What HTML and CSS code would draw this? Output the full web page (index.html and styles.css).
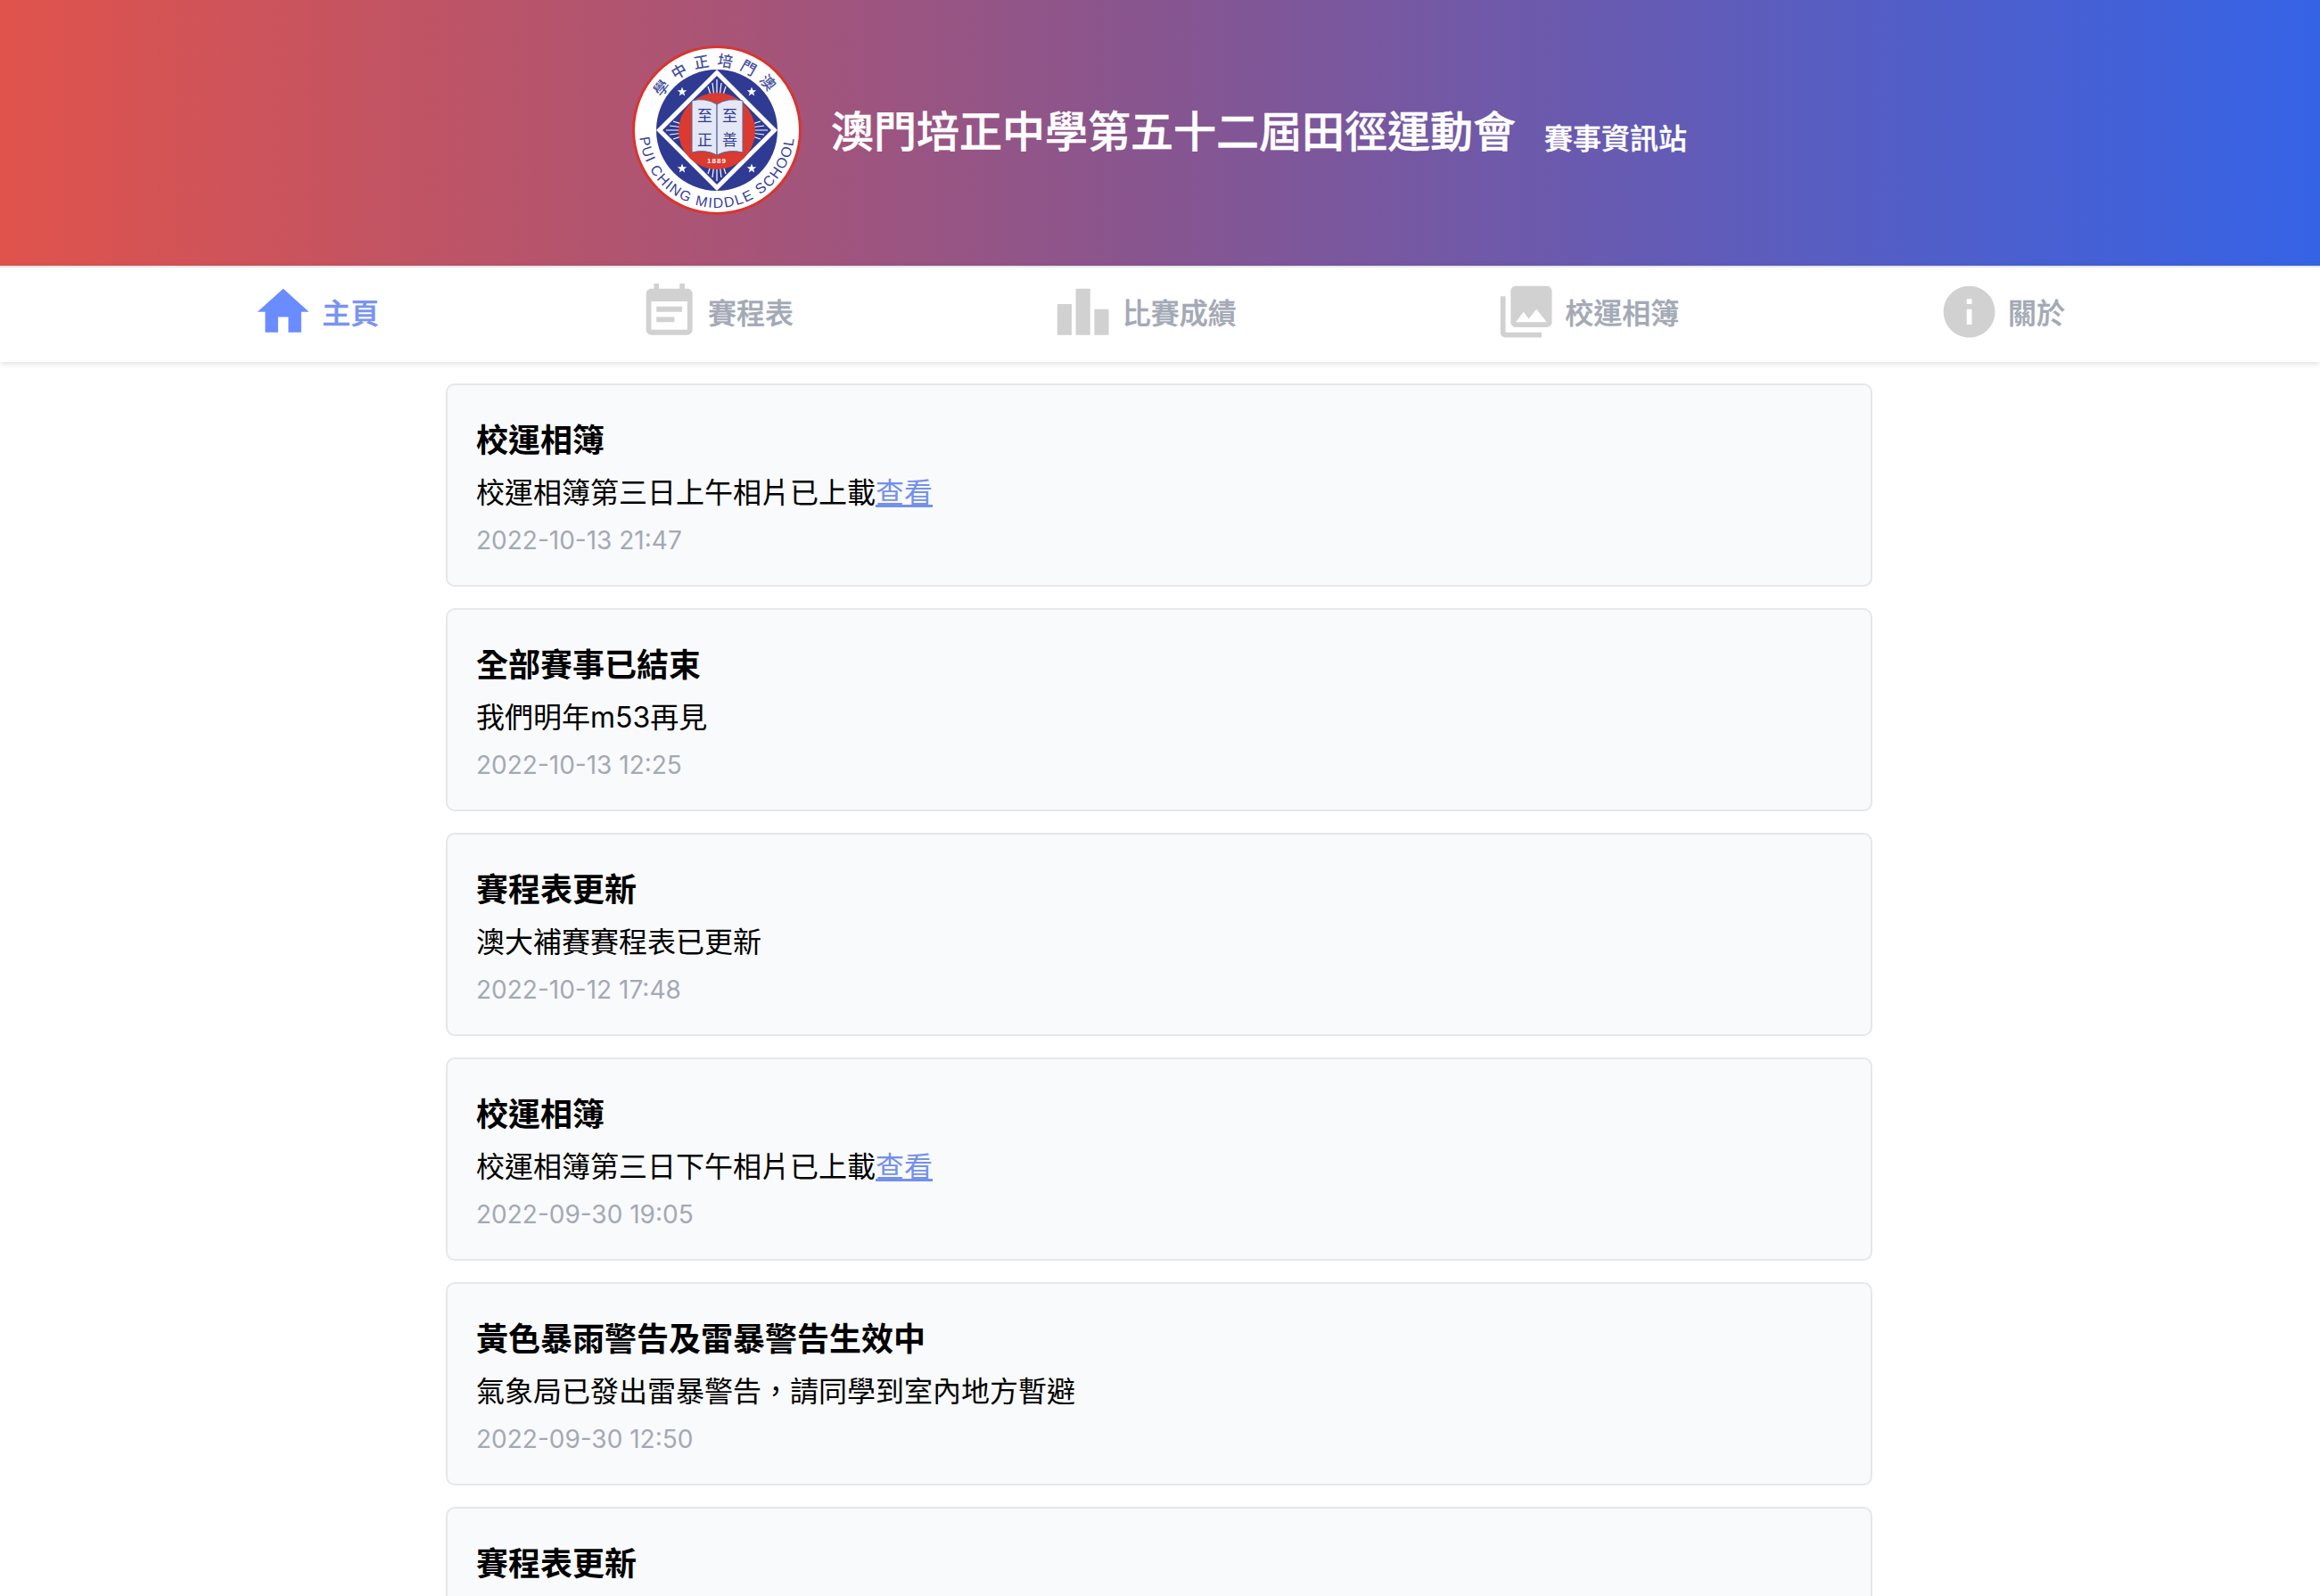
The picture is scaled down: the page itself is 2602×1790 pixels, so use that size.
FILE: index.html
```html
<!DOCTYPE html>
<html lang="zh-Hant">
<head>
<meta charset="utf-8">
<title>澳門培正中學第五十二屆田徑運動會 賽事資訊站</title>
<link rel="stylesheet" href="styles.css">
</head>
<body>
<header class="banner">
  <svg class="logo" viewBox="0 0 190 190" aria-label="Pui Ching Middle School">
    <defs>
      <path id="arcTop" d="M 23 95 A 72 72 0 0 1 167 95"/>
      <path id="arcBottom" d="M 8 95 A 87 87 0 0 0 182 95"/>
      <polygon id="star" points="0,-5.5 1.4,-1.8 5.2,-1.7 2.2,.7 3.2,4.4 0,2.2 -3.2,4.4 -2.2,.7 -5.2,-1.7 -1.4,-1.8"/>
    </defs>
    <circle cx="95" cy="95" r="93.5" fill="#fff" stroke="#d8352f" stroke-width="3"/>
    <circle cx="95" cy="95" r="68" fill="#2f3a92"/>
    <g fill="#fff">
      <use href="#star" x="56" y="52"/><use href="#star" x="134" y="52"/>
      <use href="#star" x="56" y="138"/><use href="#star" x="134" y="138"/>
    </g>
    <path d="M95 27 L163 95 L95 163 L27 95 Z" fill="#fff"/>
    <path d="M95 34 L156 95 L95 156 L34 95 Z" fill="#2f3a92"/>
    <g stroke="#fff" stroke-width="1.2">
      <path d="M95 38V54M90 42l1.5 12M100 42l-1.5 12M85 46l3 9M105 46l-3 9M95 152V136M90 148l1.5-12M100 148l-1.5-12M85 144l3-9M105 144l-3-9M38 95H54M42 90l12 1.5M42 100l12-1.5M46 85l9 3M46 105l9-3M152 95H136M148 90l-12 1.5M148 100l-12-1.5M144 85l-9 3M144 105l-9-3"/>
    </g>
    <circle cx="95" cy="96" r="43" fill="#da3a30"/>
    <path d="M67 62 Q82 58 95 66 Q108 58 124 62 V120 Q108 116 95 123 Q82 116 67 120 Z" fill="#e4e7f4" stroke="#5d659f" stroke-width="1"/>
    <path d="M95 66V123" stroke="#4a5290" stroke-width="1.2"/>
    <text class="bookch" x="81.5" y="85">至</text>
    <text class="bookch" x="109.5" y="85">至</text>
    <text class="bookch" x="81.5" y="112">正</text>
    <text class="bookch" x="109.5" y="112">善</text>
    <text class="year" x="95" y="132">1889</text>
    <text class="ring-cjk"><textPath href="#arcTop" startOffset="50%" text-anchor="middle">學中正培門澳</textPath></text>
    <text class="ring-en"><textPath href="#arcBottom" startOffset="50%" text-anchor="middle">PUI CHING MIDDLE SCHOOL</textPath></text>
  </svg>
  <h1 class="site-title">澳門培正中學第五十二屆田徑運動會</h1>
  <span class="site-sub">賽事資訊站</span>
</header>

<nav class="tabs">
  <a class="tab tab-active">
    <svg class="tab-icon" viewBox="0 0 24 24"><path d="M10 20v-6h4v6h5v-8h3L12 3 2 12h3v8z"/></svg>
    <span>主頁</span>
  </a>
  <a class="tab">
    <svg class="tab-icon" viewBox="0 0 24 24"><path d="M17 10H7v2h10v-2zm2-7h-1V1h-2v2H8V1H6v2H5c-1.11 0-1.99.9-1.99 2L3 19c0 1.1.89 2 2 2h14c1.1 0 2-.9 2-2V5c0-1.1-.9-2-2-2zm0 16H5V8h14v11zm-5-5H7v2h7v-2z"/></svg>
    <span>賽程表</span>
  </a>
  <a class="tab">
    <svg class="tab-icon" viewBox="0 0 24 24"><path d="M2 9h5.6v12H2zM9.2 3h5.6v18H9.2zM16.4 11H22v10h-5.6z"/></svg>
    <span>比賽成績</span>
  </a>
  <a class="tab">
    <svg class="tab-icon" viewBox="0 0 24 24"><path d="M22 16V4c0-1.1-.9-2-2-2H8c-1.1 0-2 .9-2 2v12c0 1.1.9 2 2 2h12c1.1 0 2-.9 2-2zm-11-4l2.03 2.71L16 11l4 5H8l3-4zM2 6v14c0 1.1.9 2 2 2h14v-2H4V6H2z"/></svg>
    <span>校運相簿</span>
  </a>
  <a class="tab">
    <svg class="tab-icon" viewBox="0 0 24 24"><path d="M12 2C6.48 2 2 6.48 2 12s4.48 10 10 10 10-4.48 10-10S17.52 2 12 2zm1 15h-2v-6h2v6zm0-8h-2V7h2v2z"/></svg>
    <span>關於</span>
  </a>
</nav>

<main class="feed">
  <article class="card">
    <h2 class="card-title">校運相簿</h2>
    <p class="card-body">校運相簿第三日上午相片已上載<a class="card-link">查看</a></p>
    <time class="card-date">2022-10-13 21:47</time>
  </article>
  <article class="card">
    <h2 class="card-title">全部賽事已結束</h2>
    <p class="card-body">我們明年m53再見</p>
    <time class="card-date">2022-10-13 12:25</time>
  </article>
  <article class="card">
    <h2 class="card-title">賽程表更新</h2>
    <p class="card-body">澳大補賽賽程表已更新</p>
    <time class="card-date">2022-10-12 17:48</time>
  </article>
  <article class="card">
    <h2 class="card-title">校運相簿</h2>
    <p class="card-body">校運相簿第三日下午相片已上載<a class="card-link">查看</a></p>
    <time class="card-date">2022-09-30 19:05</time>
  </article>
  <article class="card">
    <h2 class="card-title">黃色暴雨警告及雷暴警告生效中</h2>
    <p class="card-body">氣象局已發出雷暴警告，請同學到室內地方暫避</p>
    <time class="card-date">2022-09-30 12:50</time>
  </article>
  <article class="card">
    <h2 class="card-title">賽程表更新</h2>
    <p class="card-body">賽程表已更新</p>
    <time class="card-date">2022-09-30 10:00</time>
  </article>
</main>
</body>
</html>
```
FILE: styles.css
```css
* { box-sizing: border-box; }
html, body { margin: 0; padding: 0; height: 1790px; overflow: hidden; background: #fff; }
body { font-family: Inter, "Noto Sans CJK TC", sans-serif; color: #000; }

.banner {
  height: 298px;
  display: flex;
  align-items: center;
  justify-content: center;
  padding-right: 2px;
  background: linear-gradient(to right, #e0534c, #875590 50%, #3563e6);
  color: #fff;
}
.logo { width: 190px; height: 190px; margin: -6px 33px 0 1px; flex: none; }
.site-title { margin: 0 0 3px; font-size: 48px; font-weight: 500; line-height: 1; -webkit-text-stroke: .5px #fff; }
.site-sub { margin-left: 32px; margin-top: 14px; font-size: 32px; font-weight: 500; line-height: 1; -webkit-text-stroke: .4px #fff; }

.bookch { font-family: "Noto Sans CJK TC", serif; font-size: 17px; fill: #2f3a92; text-anchor: middle; }
.year { font-family: "Liberation Sans", sans-serif; font-size: 8px; font-weight: 700; letter-spacing: 1px; fill: #fff; text-anchor: middle; }
.ring-cjk { font-family: "Noto Sans CJK TC", serif; font-size: 17px; font-weight: 500; fill: #47509f; letter-spacing: 8px; }
.ring-en { font-family: "Liberation Sans", sans-serif; font-size: 16px; fill: #36409a; letter-spacing: 1.6px; }

.tabs {
  height: 108px;
  padding: 0 286px 7px 283px;
  border-top: 2px solid #e5e7eb;
  display: flex;
  align-items: center;
  justify-content: space-between;
  background: #fff;
  box-shadow: 0 2px 6px rgba(0, 0, 0, .12);
  position: relative;
}
.tab { display: flex; align-items: center; gap: 9px; font-size: 32px; font-weight: 500; color: #a3a9b5; -webkit-text-stroke: .4px #a3a9b5; }
.tab-icon { width: 69.3px; height: 69.3px; fill: #d1d1d1; flex: none; }
.tab-active { color: #7893f2; -webkit-text-stroke-color: #7893f2; }
.tab-active .tab-icon { fill: #6b8cff; }

.feed {
  width: 1600px;
  margin: 24px 0 0 500px;
  display: flex;
  flex-direction: column;
  gap: 24px;
}
.card {
  height: 228px;
  padding: 36px 32px 0;
  background: #f9fafb;
  border: 2px solid #e5e7eb;
  border-radius: 10px;
  flex: none;
}
.card-title { margin: 0; font-size: 36px; font-weight: 700; line-height: 52px; }
.card-body { margin: 9px 0 0; font-size: 32px; line-height: 48px; font-weight: 400; }
.card-link { color: #7390ea; text-decoration: underline; }
.card-date { display: block; margin-top: 9px; font-size: 28px; line-height: 40px; color: #a3a9b5; }
```
